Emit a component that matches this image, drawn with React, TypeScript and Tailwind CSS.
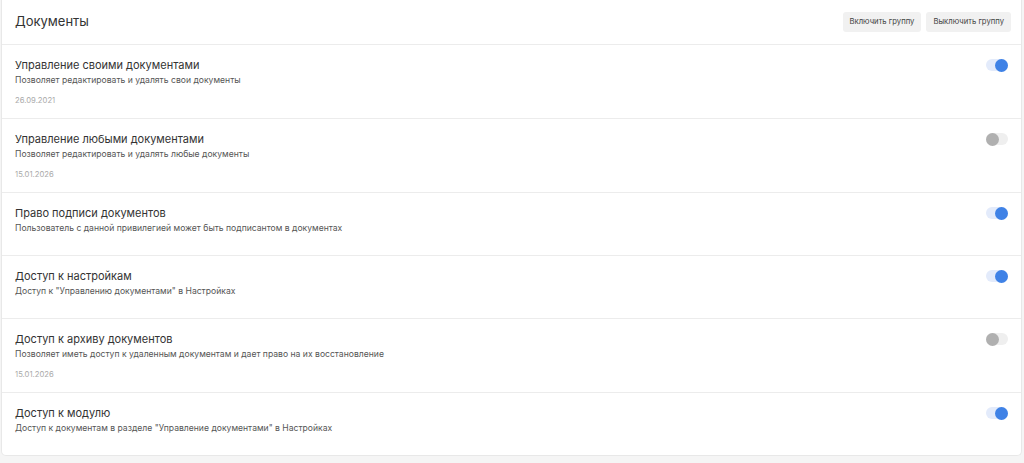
import React, { useState } from "react";

type Privilege = {
  id: number;
  title: string;
  description: string;
  date?: string;
  enabled: boolean;
};

const initial: Privilege[] = [
  {
    id: 1,
    title: "Управление своими документами",
    description: "Позволяет редактировать и удалять свои документы",
    date: "26.09.2021",
    enabled: true,
  },
  {
    id: 2,
    title: "Управление любыми документами",
    description: "Позволяет редактировать и удалять любые документы",
    date: "15.01.2026",
    enabled: false,
  },
  {
    id: 3,
    title: "Право подписи документов",
    description: "Пользователь с данной привилегией может быть подписантом в документах",
    enabled: true,
  },
  {
    id: 4,
    title: "Доступ к настройкам",
    description: 'Доступ к "Управлению документами" в Настройках',
    enabled: true,
  },
  {
    id: 5,
    title: "Доступ к архиву документов",
    description: "Позволяет иметь доступ к удаленным документам и дает право на их восстановление",
    date: "15.01.2026",
    enabled: false,
  },
  {
    id: 6,
    title: "Доступ к модулю",
    description: 'Доступ к документам в разделе "Управление документами" в Настройках',
    enabled: true,
  },
];

const Toggle: React.FC<{ on: boolean; onChange: () => void }> = ({ on, onChange }) => (
  <button
    onClick={onChange}
    className={
      "relative w-[22px] h-[12px] rounded-full flex items-center " +
      (on ? "bg-[#e3ebfb] justify-end" : "bg-[#efefef] justify-start")
    }
  >
    <span
      className={
        "block size-[13px] rounded-full " + (on ? "bg-[#3f82e6]" : "bg-[#b0b0b0]")
      }
    />
  </button>
);

export default function App() {
  const [items, setItems] = useState(initial);

  const setAll = (value: boolean) =>
    setItems((prev) => prev.map((p) => ({ ...p, enabled: value })));

  return (
    <div
      className="min-h-screen bg-[#f5f5f5] pl-[1px] pr-[2px] pb-[6px]"
      style={{ fontFamily: "Inter, 'Noto Sans', sans-serif" }}
    >
      <div className="bg-white border border-t-0 border-[#e8e8e8] rounded-b-[5px]">
        <div className="h-[45px] flex items-center justify-between pl-[13px] pr-[10px] border-b border-[#ececec]">
          <h1 className="text-[13px] text-[#333] font-normal">Документы</h1>
          <div className="flex gap-[5px]">
            <button
              onClick={() => setAll(true)}
              className="h-[20px] px-[7px] rounded-[3px] bg-[#f1f1f1] text-[7.7px] text-[#444]"
            >
              Включить группу
            </button>
            <button
              onClick={() => setAll(false)}
              className="h-[20px] px-[7px] rounded-[3px] bg-[#f1f1f1] text-[7.7px] text-[#444]"
            >
              Выключить группу
            </button>
          </div>
        </div>

        {items.map((p, i) => (
          <div
            key={p.id}
            className={
              "flex justify-between pl-[13px] pr-[13px] pt-[12px] " +
              (p.date ? "pb-[11px]" : "pb-[20px]") +
              (i < items.length - 1 ? " border-b border-[#ececec]" : "")
            }
          >
            <div>
              <div className="text-[11px] leading-[16px] text-[#333]">{p.title}</div>
              <div className="text-[8.6px] leading-[14px] text-[#555]">{p.description}</div>
              {p.date && (
                <div className="mt-[8px] text-[7.7px] leading-[12px] text-[#aaa]">{p.date}</div>
              )}
            </div>
            <div className="pt-[2px]">
              <Toggle
                on={p.enabled}
                onChange={() =>
                  setItems((prev) =>
                    prev.map((x) => (x.id === p.id ? { ...x, enabled: !x.enabled } : x))
                  )
                }
              />
            </div>
          </div>
        ))}
      </div>
    </div>
  );
}
